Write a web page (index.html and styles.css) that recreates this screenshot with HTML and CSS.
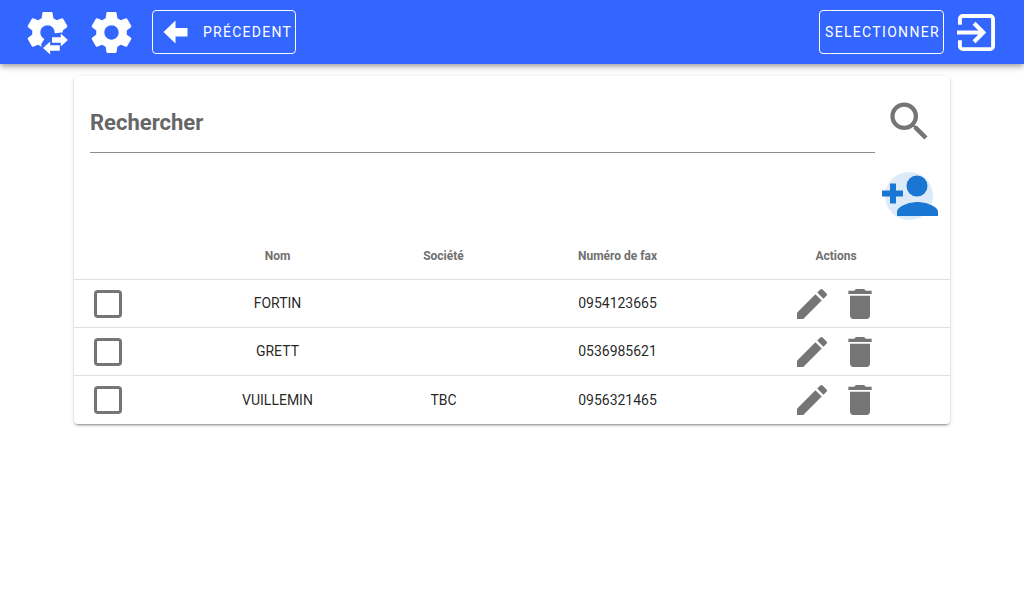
FILE: index.html
```html
<!DOCTYPE html>
<html lang="fr">
<head>
<meta charset="utf-8">
<title>Contacts</title>
<link rel="stylesheet" href="styles.css">
</head>
<body>
<header class="topbar">
  <div class="topbar-group">
    <svg class="gear" viewBox="0 0 24 24"><use href="#gear-shape"/>
      <path class="cut" d="M11 14.5 L14.5 12.5 L24 11.5 V24 H9 V17.5z"/>
      <path class="swap" d="M14.2 14.3h4.3v-1.8l3.5 3.2-3.5 3.2V17h-4.3z"/>
      <path class="swap" d="M9.8 19.6l3.5-3.2v1.8H18v2.8h-4.7v1.8z"/>
    </svg>
    <svg class="gear gear-second" viewBox="0 0 24 24"><use href="#gear-shape"/></svg>
    <button class="bar-btn back-btn">
      <svg class="back-arrow" viewBox="0 0 24 24"><path d="M0 12 L12 .5 V8 H24 V16.5 H12 V23.5 Z"/></svg>
      <span>PRÉCEDENT</span>
    </button>
  </div>
  <div class="topbar-group">
    <button class="bar-btn select-btn">SELECTIONNER</button>
    <svg class="exit" viewBox="0 0 40 40"><path d="M3 12V6a3 3 0 0 1 3-3h28a3 3 0 0 1 3 3v28a3 3 0 0 1-3 3H6a3 3 0 0 1-3-3v-6" fill="none" stroke="#fff" stroke-width="4"/><path d="M0 18h22l-6-6 3-3 11 11-11 11-3-3 6-6H0z" fill="#fff"/></svg>
  </div>
</header>
<svg class="defs" aria-hidden="true">
  <defs>
    <symbol id="gear-shape" viewBox="0 0 24 24"><path fill="#fff" d="M19.43 12.98c.04-.32.07-.64.07-.98s-.03-.66-.07-.98l2.11-1.65c.19-.15.24-.42.12-.64l-2-3.46c-.12-.22-.39-.3-.61-.22l-2.49 1c-.52-.4-1.08-.73-1.69-.98l-.38-2.65C14.46 2.18 14.25 2 14 2h-4c-.25 0-.46.18-.49.42l-.38 2.65c-.61.25-1.17.59-1.69.98l-2.49-1c-.23-.09-.49 0-.61.22l-2 3.46c-.13.22-.07.49.12.64l2.11 1.65c-.04.32-.07.65-.07.98s.03.66.07.98l-2.11 1.65c-.19.15-.24.42-.12.64l2 3.46c.12.22.39.3.61.22l2.49-1c.52.4 1.08.73 1.69.98l.38 2.65c.03.24.24.42.49.42h4c.25 0 .46-.18.49-.42l.38-2.65c.61-.25 1.17-.59 1.69-.98l2.49 1c.23.09.49 0 .61-.22l2-3.46c.12-.22.07-.49-.12-.64l-2.11-1.65zM12 15.5c-1.93 0-3.5-1.57-3.5-3.5s1.57-3.5 3.5-3.5 3.5 1.57 3.5 3.5-1.57 3.5-3.5 3.5z"/></symbol>
    <symbol id="edit-shape" viewBox="0 0 24 24"><path fill="#757575" d="M3 17.25V21h3.75L17.81 9.94l-3.75-3.75L3 17.25zM20.71 7.04a1 1 0 0 0 0-1.41l-2.34-2.34a1 1 0 0 0-1.41 0l-1.83 1.83 3.75 3.75 1.83-1.83z"/></symbol>
    <symbol id="trash-shape" viewBox="0 0 24 24"><path fill="#757575" d="M6 19c0 1.1.9 2 2 2h8c1.1 0 2-.9 2-2V7H6v12zM19 4h-3.5l-1-1h-5l-1 1H5v2h14V4z"/></symbol>
  </defs>
</svg>
<main class="card">
  <section class="search-row">
    <div class="search-field">Rechercher</div>
    <svg class="search-icon" viewBox="0 0 24 24"><path fill="#757575" d="M15.5 14h-.79l-.28-.27A6.47 6.47 0 0 0 16 9.5 6.5 6.5 0 1 0 9.5 16c1.61 0 3.09-.59 4.23-1.57l.27.28v.79l5 4.99L20.49 19l-4.99-5zm-6 0C7.01 14 5 11.99 5 9.5S7.01 5 9.5 5 14 7.01 14 9.5 11.99 14 9.5 14z"/></svg>
  </section>
  <div class="add-row">
    <svg class="add-icon" viewBox="0 0 58 50"><circle cx="28" cy="25" r="24" fill="#dcebf7"/><circle cx="36" cy="15" r="10.5" fill="#1976d2"/><path d="M16 45v-4c0-6 13-10 20.5-10S57 35 57 41v4z" fill="#1976d2"/><path d="M9 12.5h6v7h7v6h-7v7H9v-7H1v-6h8z" fill="#1976d2"/></svg>
  </div>
  <div class="row head">
    <div></div><div>Nom</div><div>Société</div><div>Numéro de fax</div><div>Actions</div>
  </div>
  <div class="row">
    <div class="check-cell"><span class="check"></span></div><div>FORTIN</div><div></div><div>0954123665</div>
    <div class="actions"><svg class="act" viewBox="0 0 24 24"><use href="#edit-shape"/></svg><svg class="act" viewBox="0 0 24 24"><use href="#trash-shape"/></svg></div>
  </div>
  <div class="row">
    <div class="check-cell"><span class="check"></span></div><div>GRETT</div><div></div><div>0536985621</div>
    <div class="actions"><svg class="act" viewBox="0 0 24 24"><use href="#edit-shape"/></svg><svg class="act" viewBox="0 0 24 24"><use href="#trash-shape"/></svg></div>
  </div>
  <div class="row row-last">
    <div class="check-cell"><span class="check"></span></div><div>VUILLEMIN</div><div>TBC</div><div>0956321465</div>
    <div class="actions"><svg class="act" viewBox="0 0 24 24"><use href="#edit-shape"/></svg><svg class="act" viewBox="0 0 24 24"><use href="#trash-shape"/></svg></div>
  </div>
</main>
</body>
</html>
```
FILE: styles.css
```css
* { box-sizing: border-box; }
html, body { margin: 0; height: 100%; }
body { background: #fff; font-family: Roboto, "Liberation Sans", sans-serif; color: rgba(0,0,0,.87); overflow: hidden; }
.defs { width: 0; height: 0; display: block; }

.topbar { height: 64px; background: #3366ff; display: flex; justify-content: space-between; align-items: center; padding: 0 24px 0 23px; box-shadow: 0 2px 4px -1px rgba(0,0,0,.2), 0 4px 5px rgba(0,0,0,.14), 0 1px 10px rgba(0,0,0,.12); }
.topbar-group { display: flex; align-items: center; }
.gear { width: 49px; height: 49px; display: block; }
.gear-second { margin-left: 15px; }
.cut { fill: #3366ff; }
.swap { fill: #fff; stroke: #3366ff; stroke-width: .5; paint-order: stroke; }
.bar-btn { height: 44px; background: transparent; border: 1px solid #fff; border-radius: 4px; color: #fff; font: 400 14px Roboto, sans-serif; letter-spacing: 1.25px; display: flex; align-items: center; padding: 0; }
.back-btn { width: 144px; margin-left: 16px; padding-left: 10px; }
.back-btn span { margin-left: 15px; }
.back-arrow { width: 25px; height: 24px; fill: #fff; display: block; }
.select-btn { width: 125px; justify-content: center; letter-spacing: 1.32px; padding-left: 2px; }
.exit { width: 39px; height: 39px; margin-left: 13px; margin-right: 4px; display: block; }

.card { width: 876px; margin: 12px 0 0 74px; background: #fff; border-radius: 4px; box-shadow: 0 3px 1px -2px rgba(0,0,0,.2), 0 2px 2px rgba(0,0,0,.14), 0 1px 5px rgba(0,0,0,.12); }
.search-row { display: flex; padding: 16px 0 0 16px; height: 78px; }
.search-field { width: 785px; height: 61px; border-bottom: 1px solid #8c8c8c; font-size: 22px; font-weight: 700; color: #666; line-height: 61px; }
.search-icon { width: 51px; height: 51px; margin: 4px 0 0 9px; display: block; }
.add-row { display: flex; justify-content: flex-end; padding: 17px 11px 0 0; height: 78px; }
.add-icon { width: 58px; height: 50px; display: block; }

.row { display: grid; grid-template-columns: 97px 213px 119px 229px 208px; padding: 0 10px 1px 0; height: 48px; align-items: center; text-align: center; font-size: 14px; border-top: 1px solid #e0e0e0; }
.row.head { border-top: 0; height: 47px; padding-bottom: 0; font-size: 12px; font-weight: 700; color: #707070; }
.row-last { height: 49px; padding-bottom: 0; }
.check-cell { display: flex; padding-left: 20px; margin-top: 2px; }
.check { width: 28px; height: 28px; border: 3.5px solid #757575; border-radius: 4px; display: block; }
.actions { display: flex; justify-content: center; margin-top: 2px; }
.row-last .check-cell, .row-last .actions { margin-top: 0; }
.act { width: 48px; height: 40px; display: block; }
```
